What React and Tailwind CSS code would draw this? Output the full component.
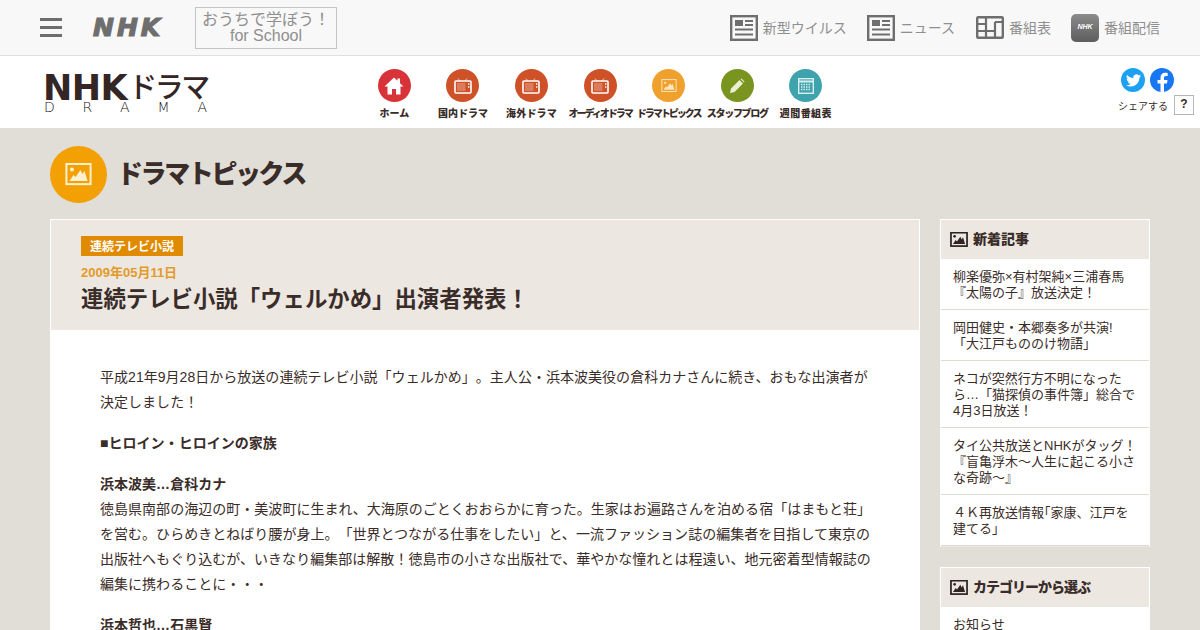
function Photo({ size = 24, color = "#fff", sw = 2 }) {
  return (
    <svg width={size} height={size * 0.82} viewBox="0 0 26 22" className="block">
      <rect x="1" y="1" width="24" height="20" fill="none" stroke={color} strokeWidth={sw} />
      <circle cx="6.5" cy="6.5" r="2" fill={color} />
      <path d="M4 18 L8 12 L10 14 L15 7 L17 11 L19 8 L22 18 Z" fill={color} />
    </svg>
  );
}
function NewsIcon() {
  return (
    <svg width="28" height="26" viewBox="0 0 28 26" className="block">
      <rect x="1.2" y="1.2" width="25.6" height="23.6" fill="none" stroke="#6e6e6e" strokeWidth="2.4" />
      <rect x="5" y="5" width="8" height="6" fill="#6e6e6e" />
      <path d="M15 6h8M15 10h8M5 14.500h18M5 19.500h18" stroke="#6e6e6e" strokeWidth="2" />
    </svg>
  );
}
function GridIcon() {
  return (
    <svg width="28" height="23" viewBox="0 0 28 23" className="block">
      <rect x="1.200" y="1.200" width="25.600" height="20.600" rx="1" fill="none" stroke="#6e6e6e" strokeWidth="2.400" />
      <path d="M10 1v21M19 6v16M1 8h9M1 15h18M19 6h8" stroke="#6e6e6e" strokeWidth="2.200" fill="none" />
    </svg>
  );
}
function Tv() {
  return (
    <svg width="18" height="16" viewBox="0 0 18 16" className="block">
      <path d="M6 3L4 0.5M11 3l2-2.5" stroke="#efc9b5" strokeWidth="1" />
      <rect x="1" y="3" width="16" height="12" rx="1" fill="none" stroke="#fff" strokeWidth="1.6" />
      <rect x="3" y="5" width="8.5" height="8" fill="#fff" fillOpacity="0.25" />
      <path d="M14 6h1.4M14 9h1.4" stroke="#fff" strokeWidth="1.5" />
    </svg>
  );
}
const nav = [
  ["ホーム", "bg-[#d9333a]", "home", "tracking-[0px]"],
  ["国内ドラマ", "bg-[#ce5127]", "tv", "tracking-[0px]"],
  ["海外ドラマ", "bg-[#ce5127]", "tv", "tracking-[0.2px]"],
  ["オーディオドラマ", "bg-[#ce5127]", "tv", "tracking-[-2px]"],
  ["ドラマトピックス", "bg-[#f0a02c]", "photo", "tracking-[-2px]"],
  ["スタッフブログ", "bg-[#79951f]", "pen", "tracking-[-1.3px]"],
  ["週間番組表", "bg-[#3fa3ae]", "cal", "tracking-[0.4px]"],
];
function NavIcon({ k }) {
  if (k === "home")
    return (
      <svg width="20" height="18" viewBox="0 0 20 18" className="block">
        <path d="M10 0.5L0.5 9.5H3.5V17.5H8V12H12V17.5H16.5V9.5H19.5L16 6.2V1.5H13.5V3.8Z" fill="#fff" />
      </svg>
    );
  if (k === "tv") return <Tv />;
  if (k === "photo") return <Photo size={16} color="#fbe6bd" sw={1.6} />;
  if (k === "pen")
    return (
      <svg width="16" height="16" viewBox="0 0 16 16" className="block">
        <path d="M1 15L2 10.5L10.5 2L14 5.5L5.5 14Z M11.5 1L12.5 0.5L15.5 3.5L15 4.5Z" fill="#e8efd2" />
      </svg>
    );
  return (
    <svg width="16" height="16" viewBox="0 0 16 16" className="block">
      <rect x="0.7" y="0.7" width="14.6" height="14.6" fill="none" stroke="#d9eef0" strokeWidth="1.4" />
      <path d="M0.7 3.5H15.3" stroke="#d9eef0" strokeWidth="2" />
      <path d="M3 6.5h10M3 9h10M3 11.5h10" stroke="#d9eef0" strokeWidth="1.4" strokeDasharray="1.5 1" />
    </svg>
  );
}
const news = [
  ["柳楽優弥×有村架純×三浦春馬", "『太陽の子』放送決定！"],
  ["岡田健史・本郷奏多が共演!", "「大江戸もののけ物語」"],
  ["ネコが突然行方不明になった", "ら…「猫探偵の事件簿」総合で", "4月3日放送！"],
  ["タイ公共放送とNHKがタッグ！", "『盲亀浮木～人生に起こる小さ", "な奇跡～』"],
  ["４Ｋ再放送情報｢家康、江戸を", "建てる｣"],
];
function TopLink({ icon, label, extra = "" }) {
  return (
    <div className={`flex items-center gap-[5px] ${extra}`}>
      {icon}
      <span className="mt-[1px] text-[14px] text-[#8f8f8f]">{label}</span>
    </div>
  );
}
function SideHead({ children, tr = "" }) {
  return (
    <div className="h-[39px] bg-[#ece7e1] flex items-center pl-[9px] gap-[5px]">
      <Photo size={18} color="#2f2422" sw={2.6} />
      <span className={`text-[14px] font-black text-[#3a2c28] ${tr}`}>{children}</span>
    </div>
  );
}
export default function App() {
  return (
    <div
      className="h-[630px] overflow-hidden bg-[#e1ddd7] text-[#3a2c28] [text-spacing-trim:space-all]"
      style={{ fontFamily: '"Liberation Sans","Noto Sans CJK JP",sans-serif' }}
    >
      <div className="h-[56px] bg-[#f8f8f8] border-b border-[#dfdfdf] flex items-center">
        <div className="ml-[40px] w-[22px] flex flex-col gap-[5px]">
          <div className="h-[3px] bg-[#6e6e6e]" />
          <div className="h-[3px] bg-[#6e6e6e]" />
          <div className="h-[3px] bg-[#6e6e6e]" />
        </div>
        <div className="ml-[31px] w-[72px] text-[25px] leading-[28px] font-bold italic text-[#6e6e6e] tracking-[3px] [-webkit-text-stroke:1.2px_#6e6e6e] [font-family:'DejaVu_Sans',sans-serif]">
          NHK
        </div>
        <div className="ml-[30px] w-[142px] h-[42px] border border-[#c4c4c4] flex flex-col items-center justify-center pt-[1px] text-[#8f8f8f] text-[16px] leading-[16px]">
          <span>おうちで学ぼう！</span>
          <span>for School</span>
        </div>
        <div className="ml-auto mr-[40px] flex items-center gap-[20px]">
          <TopLink icon={<NewsIcon />} label="新型ウイルス" />
          <TopLink icon={<NewsIcon />} label="ニュース" extra="pr-[1px]" />
          <TopLink icon={<GridIcon />} label="番組表" />
          <TopLink
            icon={
              <div className="w-[28px] h-[28px] rounded-[5px] bg-gradient-to-b from-[#8c8c8c] to-[#5e5e5e] flex items-center justify-center text-[7px] font-bold italic text-white">
                NHK
              </div>
            }
            label="番組配信"
          />
        </div>
      </div>

      <div className="h-[73px] bg-white border-b border-[#e0dcd6] flex relative">
        <div className="ml-[43px] mt-[18px] w-[170px] flex flex-col">
          <div className="flex items-center h-[28px] text-[#332624] whitespace-nowrap">
            <span className="text-[35px] leading-[28px] font-bold [font-family:'DejaVu_Sans',sans-serif] tracking-[-0.5px]">NHK</span>
            <span className="text-[29px] leading-[28px] font-medium tracking-[-2.5px] ml-[1px]">ドラマ</span>
          </div>
          <div className="ml-[1px] flex justify-between w-[163px] text-[14px] leading-[10px] text-[#1a1210] [font-family:'DejaVu_Sans',sans-serif] font-extralight">
            <span>D</span><span>R</span><span>A</span><span>M</span><span>A</span>
          </div>
        </div>
        <div className="absolute left-[360px] top-[13px] flex">
          {nav.map(([label, bg, k, tr]) => (
            <div key={label} className="w-[68.6px] flex flex-col items-center">
              <div className={`w-[33px] h-[33px] rounded-full ${bg} flex items-center justify-center`}>
                <NavIcon k={k} />
              </div>
              <div className={`mt-[4px] text-[10px] leading-[16px] font-black whitespace-nowrap text-[#3a2c28] ${tr}`}>{label}</div>
            </div>
          ))}
        </div>
        <div className="ml-auto mt-[12px] w-[80px] flex flex-col">
          <div className="flex gap-[5px] ml-[1px]">
            <div className="w-[24px] h-[24px] rounded-full bg-[#1da1f2] flex items-center justify-center">
              <svg width="15" height="13" viewBox="0 0 24 20" className="block">
                <path d="M24 2.4a10 10 0 0 1-2.8.8A5 5 0 0 0 23.300.5a10 10 0 0 1-3.100 1.200A4.900 4.900 0 0 0 11.800 6.200 14 14 0 0 1 1.700 1a4.900 4.900 0 0 0 1.500 6.600A4.900 4.900 0 0 1 1 7v.1a4.900 4.900 0 0 0 3.900 4.800 5 5 0 0 1-2.200.1 4.900 4.900 0 0 0 4.600 3.400A9.900 9.900 0 0 1 0 17.500 14 14 0 0 0 7.500 19.700c9.100 0 14-7.500 14-14v-.6A10 10 0 0 0 24 2.400z" fill="#fff" />
              </svg>
            </div>
            <div className="w-[24px] h-[24px] rounded-full bg-[#1877f2] overflow-hidden flex items-end justify-center">
              <svg width="12" height="21" viewBox="0 0 12 21" className="block">
                <path d="M8 21V12.500H11L11.500 9H8V6.800C8 5.800 8.500 5 10 5H11.700V2C11.200 1.900 10.200 1.800 9.200 1.800 6.400 1.800 4.500 3.500 4.500 6.400V9H1.500V12.500H4.500V21Z" fill="#fff" />
              </svg>
            </div>
          </div>
          <div className="mt-[3px] flex items-end -ml-[2px] whitespace-nowrap">
            <span className="text-[10px] leading-[14px] mb-[1px] text-[#3a2c28]">シェアする</span>
            <span className="ml-[6px] w-[20px] h-[20px] border border-[#b5b5b5] text-[12px] leading-[17px] font-bold text-center">?</span>
          </div>
        </div>
      </div>

      <div className="h-[90px] pl-[50px] flex items-start">
        <div className="mt-[17px] w-[57px] h-[57px] rounded-full bg-[#f3a005] flex items-center justify-center">
          <Photo size={27} color="#fdf0cf" sw={2} />
        </div>
        <div className="mt-[26px] ml-[10px] text-[26px] leading-[38px] font-black tracking-[-2.4px] text-[#3a2c28]">ドラマトピックス</div>
      </div>

      <div className="pl-[50px] flex items-start gap-[20px]">
        <div className="w-[870px] bg-white border border-white">
          <div className="h-[110px] bg-[#ece7e1] pl-[30px] pt-[16px]">
            <div className="w-[102px] h-[20px] bg-[#e08a00] text-white text-[12px] font-bold leading-[22px] text-center">連続テレビ小説</div>
            <div className="mt-[8px] text-[13px] leading-[18px] font-bold text-[#e39a2a]">2009年05月11日</div>
            <div className="mt-[2px] text-[22.4px] leading-[32px] font-bold">連続テレビ小説「ウェルかめ」出演者発表！</div>
          </div>
          <div className="pt-[35px] pl-[49px] pr-[44px] text-[14px] leading-[25px] tracking-[0.03px] text-[#3a2c28]">
            <p>平成21年9月28日から放送の連続テレビ小説「ウェルかめ」。主人公・浜本波美役の倉科カナさんに続き、おもな出演者が決定しました！</p>
            <p className="mt-[16px] font-bold">■ヒロイン・ヒロインの家族</p>
            <p className="mt-[16px] font-bold">浜本波美…倉科カナ</p>
            <p>徳島県南部の海辺の町・美波町に生まれ、大海原のごとくおおらかに育った。生家はお遍路さんを泊める宿「はまもと荘」を営む。ひらめきとねばり腰が身上。「世界とつながる仕事をしたい」と、一流ファッション誌の編集者を目指して東京の出版社へもぐり込むが、いきなり編集部は解散！徳島市の小さな出版社で、華やかな憧れとは程遠い、地元密着型情報誌の編集に携わることに・・・</p>
            <p className="mt-[16px] font-bold">浜本哲也…石黒賢</p>
          </div>
        </div>
        <div className="w-[210px] flex flex-col gap-[20px]">
          <div className="border border-white border-b-[#e9e6e1] bg-white">
            <SideHead>新着記事</SideHead>
            {news.map((lines, i) => (
              <div key={i} className="px-[12px] pt-[10px] pb-[8px] text-[13px] leading-[16px] text-[#3a2c28] border-b border-[#dedad4]">
                {lines.map((l) => <div key={l} className="whitespace-nowrap">{l}</div>)}
              </div>
            ))}
          </div>
          <div className="border border-white bg-white">
            <SideHead tr="tracking-[-1px]">カテゴリーから選ぶ</SideHead>
            <div className="px-[12px] pt-[10px] pb-[8px] text-[13px] leading-[16px]">お知らせ</div>
          </div>
        </div>
      </div>
    </div>
  );
}
